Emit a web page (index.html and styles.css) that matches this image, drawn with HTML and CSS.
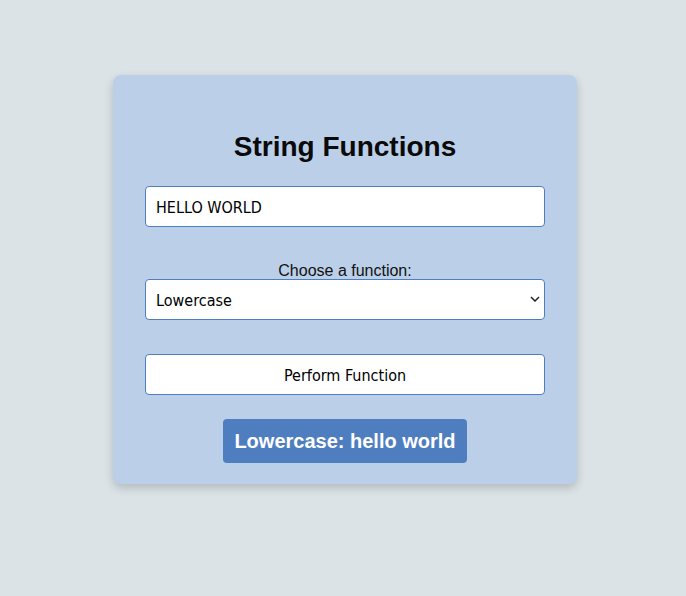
FILE: index.html
```html
<!DOCTYPE html>
<html>
<head>
<meta charset="utf-8">
<title>String Functions</title>
<link rel="stylesheet" href="styles.css">
</head>
<body>
<div class="page">
  <div class="card">
    <h1 class="title">String Functions</h1>
    <input class="field text-input" type="text" value="HELLO WORLD">
    <label class="label" for="fn">Choose a function:</label>
    <div class="select-wrap">
      <select id="fn" class="field select">
        <option>Lowercase</option>
        <option>Uppercase</option>
      </select>
      <svg class="chevron" width="10" height="6" viewBox="0 0 10 6"><path d="M1 1 L5 5 L9 1" fill="none" stroke="#222" stroke-width="1.5"/></svg>
    </div>
    <button class="field btn">Perform Function</button>
    <div class="result-row"><div class="result">Lowercase: hello world</div></div>
  </div>
</div>
</body>
</html>
```
FILE: styles.css
```css
html, body {
  margin: 0;
  padding: 0;
  background: #dbe3e6;
}
.page {
  display: flex;
  justify-content: center;
  padding: 75px 0 0 4px;
  min-height: 596px;
  box-sizing: border-box;
}
.card {
  width: 464px;
  box-sizing: border-box;
  background: #bbd0e8;
  border-radius: 8px;
  box-shadow: 0 4px 10px rgba(0, 0, 0, 0.18);
  padding: 56px 32px 21px;
  display: flex;
  flex-direction: column;
  font-family: "Liberation Sans", Arial, sans-serif;
  color: #000;
  align-self: flex-start;
}
.title {
  margin: 0;
  font-size: 28px;
  line-height: 32px;
  font-weight: bold;
  text-align: center;
  color: #0a0a0a;
}
.field {
  display: block;
  width: 400px;
  height: 41px;
  box-sizing: border-box;
  border: 1px solid #4f7ec0;
  border-radius: 4px;
  background: #fff;
  font-family: "DejaVu Sans Condensed", "DejaVu Sans", sans-serif;
  font-stretch: condensed;
  font-size: 16px;
  color: #000;
  padding: 2px 10px 0;
  margin: 0;
  outline: none;
}
.text-input {
  margin-top: 23px;
}
.label {
  display: block;
  margin-top: 35px;
  font-size: 16px;
  line-height: 18px;
  text-align: center;
  color: #111;
}
.select-wrap {
  position: relative;
  margin-top: -1px;
}
.select {
  appearance: none;
  -webkit-appearance: none;
}
.chevron {
  position: absolute;
  right: 5px;
  top: 17px;
  pointer-events: none;
}
.btn {
  margin-top: 34px;
  text-align: center;
  cursor: pointer;
}
.result-row {
  display: flex;
  justify-content: center;
  margin-top: 24px;
}
.result {
  background: #4f7ec0;
  color: #fff;
  font-weight: bold;
  font-size: 20px;
  line-height: 44px;
  height: 44px;
  padding: 0 11px;
  border-radius: 4px;
}
```
